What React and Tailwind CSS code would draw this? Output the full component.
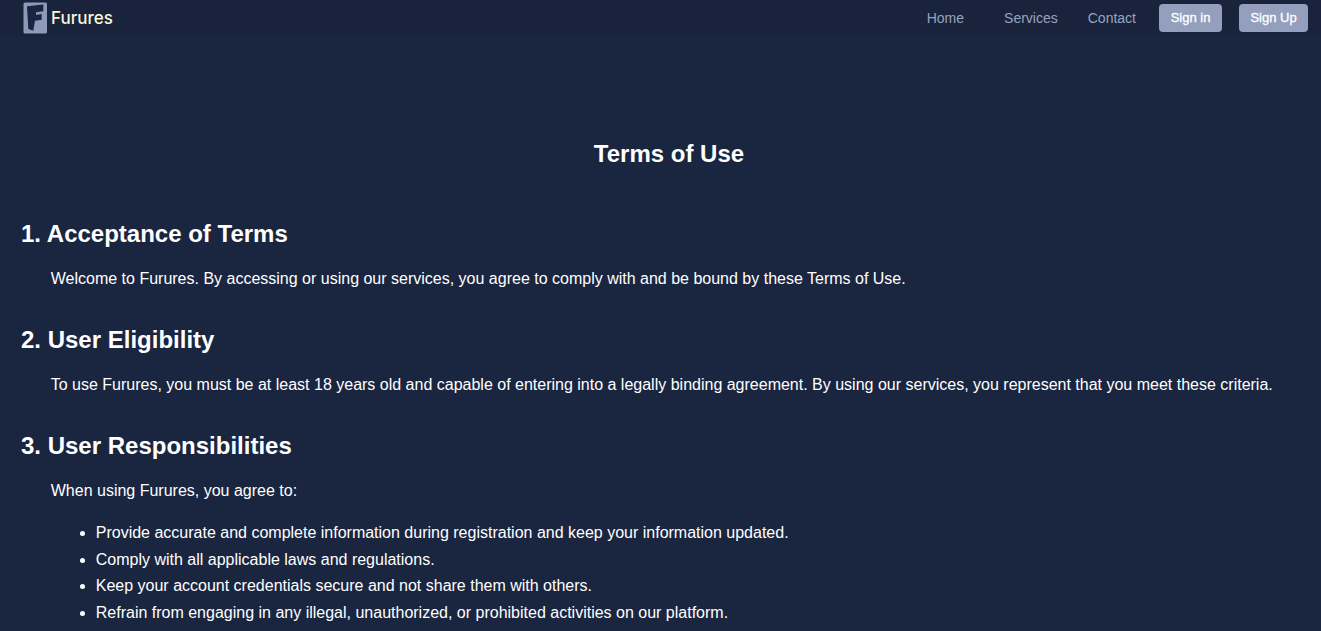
const Logo = () => (
  <div className="flex items-center">
    <svg width="24" height="32" viewBox="0 0 24 32" className="block">
      <rect x="0.5" y="0.5" width="23.5" height="31" rx="1.5" fill="#8d99b9" />
      <path d="M4 4.3 L20.3 2.5 L20.3 9.3 L13 10.3 L13 13 L18.7 12 L18.7 17.7 L12 18.7 L10.3 28.7 L5.3 27 Z" fill="#1a2540" />
    </svg>
    <span className="ml-[4px] mt-[1px] text-[17px] leading-none font-medium text-[#f7f5dc] font-['Inter',sans-serif]">
      Furures
    </span>
  </div>
);

const Section = ({ title, children }) => (
  <section className="mb-[38px]">
    <h2 className="text-2xl font-bold leading-[28px] pl-[21px]">{title}</h2>
    <div className="pl-[50.75px] pt-[22px]">{children}</div>
  </section>
);

const App = () => {
  return (
    <div className="h-[631px] overflow-hidden bg-[#1a2540] text-white font-['Liberation_Sans',Arial,sans-serif] text-base">
      <nav className="h-[36px] flex justify-between items-center bg-[#19233c] pl-[23px] pr-[13px]">
        <Logo />
        <div className="flex items-center text-sm text-[#97a3bf]">
          <a className="mr-[40px]">Home</a>
          <a className="mr-[30px]">Services</a>
          <a className="mr-[23px]">Contact</a>
          <button className="w-[63px] h-[28px] rounded bg-[#949fbd] text-white text-[13px] [-webkit-text-stroke:0.3px_white] mr-[17px]">Sign in</button>
          <button className="w-[69px] h-[28px] rounded bg-[#949fbd] text-white text-[13px] [-webkit-text-stroke:0.3px_white]">Sign Up</button>
        </div>
      </nav>

      <main>
        <h1 className="text-2xl font-bold text-center leading-[28px] pl-[17px] pt-[104px] pb-[52px]">Terms of Use</h1>
        <Section title="1. Acceptance of Terms">
          <p className="leading-[18px]">
            Welcome to Furures. By accessing or using our services, you agree to comply with and be bound by these Terms of Use.
          </p>
        </Section>
        <Section title="2. User Eligibility">
          <p className="leading-[18px]">
            To use Furures, you must be at least 18 years old and capable of entering into a legally binding agreement. By using our services, you represent that you meet these criteria.
          </p>
        </Section>
        <Section title="3. User Responsibilities">
          <p className="leading-[18px]">When using Furures, you agree to:</p>
          <ul className="list-disc pl-[45px] pt-[20px]">
            <li className="leading-[26.5px]">Provide accurate and complete information during registration and keep your information updated.</li>
            <li className="leading-[26.5px]">Comply with all applicable laws and regulations.</li>
            <li className="leading-[26.5px]">Keep your account credentials secure and not share them with others.</li>
            <li className="leading-[26.5px]">Refrain from engaging in any illegal, unauthorized, or prohibited activities on our platform.</li>
          </ul>
        </Section>
      </main>
    </div>
  );
};

export default App;
